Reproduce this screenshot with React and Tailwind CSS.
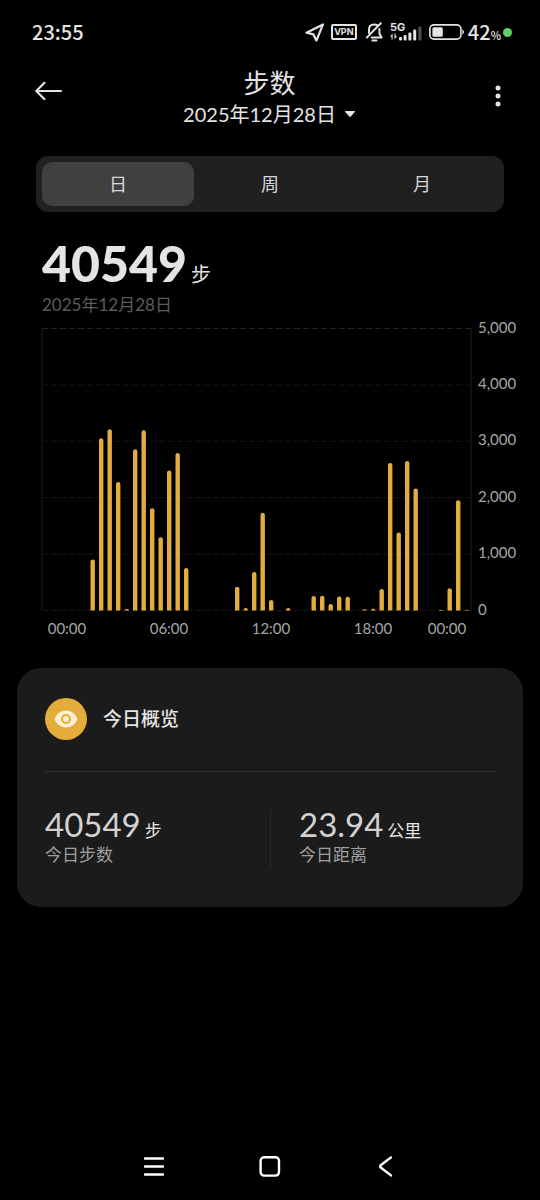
const HALF_HOURS = 51

// passos por intervalo de 30 min: [índice, passos]
const steps = [
  [6, 905], [7, 3053], [8, 3212], [9, 2280], [10, 25], [11, 2858],
  [12, 3195], [13, 1814], [14, 1300], [15, 2481], [16, 2793], [17, 752],
  [23, 421], [24, 45], [25, 681], [26, 1731], [27, 186], [29, 45],
  [32, 257], [33, 262], [34, 115], [35, 250], [36, 245], [38, 20],
  [39, 30], [40, 380], [41, 2616], [42, 1384], [43, 2651], [44, 2163],
  [47, 15], [48, 393], [49, 1956], [50, 12],
]

const yTicks = [5000, 4000, 3000, 2000, 1000, 0]

const xTicks = [
  { x: 67, label: '00:00' },
  { x: 169, label: '06:00' },
  { x: 271, label: '12:00' },
  { x: 373, label: '18:00' },
  { x: 447, label: '00:00' },
]

const LEFT = 42
const RIGHT = 471
const TOP = 8
const BASE = 290

function StatusBar() {
  return (
    <div className="h-16 pl-8 pr-7 flex items-center justify-between font-['Noto_Sans_CJK_SC',sans-serif]">
      <span className="text-xl leading-6 font-medium">23:55</span>
      <div className="flex items-center">
        <svg className="w-5 h-5 mr-1.5" viewBox="0 0 20 20" fill="none" stroke="currentColor" strokeWidth="2.2" strokeLinejoin="round">
          <path d="M18 2.4L1.5 10.8L8.4 12.4L11.4 18.6Z" />
        </svg>
        <span className="w-[26px] h-4 mr-2 border-2 border-[#e4e4e4] rounded-xs flex items-center justify-center text-[9px] leading-3 font-bold font-['Inter',sans-serif]">VPN</span>
        <svg className="w-[19px] h-5 mr-1.5" viewBox="0 0 19 20" fill="none" stroke="currentColor" strokeWidth="2" strokeLinecap="round" strokeLinejoin="round">
          <path d="M4 11V7.6C4 4.4 6.2 2.4 9.3 2.4C10.4 2.4 11.3 2.6 12.1 3.1" />
          <path d="M14.4 7V11.4L16.6 15.4H6.6" />
          <path d="M15.8 1.2L1.8 15.6" />
          <path d="M7.4 18.5H11.4" />
        </svg>
        <svg className="w-8 h-5 mr-[7px] overflow-visible" viewBox="0 0 32 20" fill="currentColor">
          <text x="0" y="9" className="text-[11px] font-bold font-['Inter',sans-serif]">5G</text>
          <path d="M0 14.5L2.6 11.5V17.5H1.5V14.5Z M7 14L4.5 17.5V11.5H5.6V14Z" />
          <rect x="9" y="15" width="3" height="3.5" rx="1" />
          <rect x="13.6" y="13" width="3" height="5.5" rx="1" />
          <rect x="18.4" y="10.5" width="3" height="8" rx="1" />
          <rect x="23.2" y="7.5" width="3" height="11" rx="1" />
          <rect x="28.4" y="4.5" width="3" height="14" rx="1" opacity="0.35" />
        </svg>
        <svg className="w-9 h-4 mr-[3px]" viewBox="0 0 36 16" fill="none">
          <rect x="0.9" y="0.9" width="31" height="14.2" rx="4" stroke="currentColor" strokeWidth="1.6" />
          <rect x="3.4" y="3.2" width="10.4" height="9.6" rx="1.5" fill="currentColor" />
          <path d="M33.4 5.5C35.4 6 35.4 10 33.4 10.5Z" fill="currentColor" />
        </svg>
        <span className="flex items-baseline text-xl leading-6 font-medium">
          42<span className="text-[11px] leading-3">%</span>
        </span>
        <span className="w-[9px] h-[9px] ml-0.5 rounded-full bg-[#62d06c]"></span>
      </div>
    </div>
  )
}

function Header() {
  return (
    <header className="h-[68px] pt-0.5 pl-[35px] pr-8 flex items-start justify-between">
      <button aria-label="返回" className="w-10 h-12 flex items-center">
        <svg className="w-7 h-5" viewBox="0 0 28 20" fill="none" stroke="currentColor" strokeWidth="2.2" strokeLinecap="round" strokeLinejoin="round">
          <path d="M26 11H1.5M9.5 2.8L1.3 11L9.5 19.2" />
        </svg>
      </button>
      <div className="pt-px flex flex-col items-center">
        <h1 className="text-[26px] leading-8">步数</h1>
        <button className="flex items-center gap-2 text-xl leading-[30px]">
          2025年12月28日
          <svg className="w-3 h-2" viewBox="0 0 12 8" fill="currentColor">
            <path d="M1.6 1H10.4Q11.6 1 10.8 2L6.8 6.6Q6 7.4 5.2 6.6L1.2 2Q0.4 1 1.6 1Z" />
          </svg>
        </button>
      </div>
      <button aria-label="更多" className="w-11 h-15 flex items-center justify-end">
        <svg className="w-5 h-6" viewBox="0 0 20 24" fill="currentColor">
          <circle cx="10" cy="4" r="2.5" />
          <circle cx="10" cy="12" r="2.5" />
          <circle cx="10" cy="20" r="2.5" />
        </svg>
      </button>
    </header>
  )
}

function StepsChart() {
  const toY = (v) => BASE + 0.5 - (v / 5000) * (BASE - TOP)
  const slot = (RIGHT - LEFT - 4) / (HALF_HOURS - 1)

  return (
    <svg className="w-full h-auto overflow-visible" viewBox="0 0 540 328" role="img" aria-label="步数">
      {yTicks.map((v) => (
        <g key={v}>
          <line x1={LEFT} x2={RIGHT} y1={toY(v)} y2={toY(v)} stroke={v === 5000 ? '#222222' : '#151515'} strokeDasharray="6 3" />
          <text x="478" y={toY(v) + 4} className="text-[15px] fill-[#a6a6a6]">{v.toLocaleString('en-US')}</text>
        </g>
      ))}
      <path d={`M${LEFT} ${TOP}V${BASE}M${RIGHT} ${TOP}V${BASE}`} stroke="#151515" strokeWidth="1.5" />
      {steps.map(([i, v]) => {
        const x = LEFT - 0.3 + i * slot
        const y = toY(v)
        const r = Math.min(2.1, BASE - y)
        return (
          <path
            key={i}
            fill="#e2ac3f"
            d={`M${x - 2.2} ${BASE + 0.5}V${y + r}Q${x - 2.2} ${y} ${x} ${y}Q${x + 2.2} ${y} ${x + 2.2} ${y + r}V${BASE + 0.5}Z`}
          />
        )
      })}
      {xTicks.map((t) => (
        <text key={t.x} x={t.x} y="314" textAnchor="middle" className="text-[15px] fill-[#a6a6a6]">{t.label}</text>
      ))}
    </svg>
  )
}

function Stat({ value, unit, label }) {
  return (
    <div>
      <p className="flex items-baseline gap-1 text-[#d2d2d2]">
        <span className="text-[33px] leading-7">{value}</span>
        <span className="text-[17px] leading-6 text-[#e8e8e8]">{unit}</span>
      </p>
      <p className="text-[17px] leading-6 text-[#a0a0a0]">{label}</p>
    </div>
  )
}

export default function App() {
  return (
    <div className="min-h-screen bg-black text-[#e4e4e4] flex flex-col font-['Lato','Noto_Sans_CJK_SC',sans-serif]">
      <StatusBar />
      <Header />

      {/* 日 / 周 / 月 */}
      <div className="mx-9 mt-6 p-1.5 flex rounded-xl bg-[#202020] text-lg leading-6 text-[#d8d8d8]">
        <button className="flex-1 h-11 rounded-[10px] bg-[#404040]">日</button>
        <button className="flex-1 h-11">周</button>
        <button className="flex-1 h-11">月</button>
      </div>

      <div className="px-[42px] pt-6">
        <p className="flex items-baseline gap-1">
          <span className="text-[50px] leading-[54px] font-black">40549</span>
          <span className="text-xl leading-6">步</span>
        </p>
        <p className="text-[17px] leading-[30px] text-[#5c5c5c]">2025年12月28日</p>
      </div>

      <StepsChart />

      {/* Resumo do dia */}
      <section className="mx-[17px] mt-5 px-7 pt-[30px] pb-10 rounded-3xl bg-[#1b1b1b]">
        <div className="pb-[31px] flex items-center gap-4 border-b border-[#303030]">
          <svg className="w-[42px] h-[42px]" viewBox="0 0 42 42">
            <circle cx="21" cy="21" r="21" fill="#e4ac3a" />
            <path d="M9.4 21C12 15.3 16 12.6 21 12.6S30 15.3 32.6 21C30 26.7 26 29.4 21 29.4S12 26.7 9.4 21Z" fill="#fdf1d2" />
            <circle cx="21" cy="21" r="4" fill="none" stroke="#e4ac3a" strokeWidth="2" />
          </svg>
          <h2 className="text-[19px] leading-7 font-medium">今日概览</h2>
        </div>
        <div className="pt-[38px] grid grid-cols-2">
          <Stat value="40549" unit="步" label="今日步数" />
          <div className="pl-7 border-l border-[#2a2a2a]">
            <Stat value="23.94" unit="公里" label="今日距离" />
          </div>
        </div>
      </section>

      <nav className="mt-auto h-[68px] px-24 grid grid-cols-3 items-center justify-items-center">
        <button aria-label="最近任务">
          <svg className="w-6 h-6" viewBox="0 0 24 24" stroke="#fff" strokeWidth="2.4" strokeLinecap="round">
            <path d="M3 4.5H21M3 12.5H21M3 20.5H21" />
          </svg>
        </button>
        <button aria-label="主页">
          <svg className="w-6 h-6" viewBox="0 0 24 24" fill="none" stroke="#fff" strokeWidth="2.4">
            <rect x="2.6" y="3.2" width="18.4" height="18.4" rx="3.6" />
          </svg>
        </button>
        <button aria-label="返回上一级">
          <svg className="w-6 h-6" viewBox="0 0 24 24" fill="none" stroke="#fff" strokeWidth="2.4" strokeLinecap="round" strokeLinejoin="round">
            <path d="M17 3.4L7 11Q5.4 12.4 7 13.8L17 21.4" />
          </svg>
        </button>
      </nav>
    </div>
  )
}
